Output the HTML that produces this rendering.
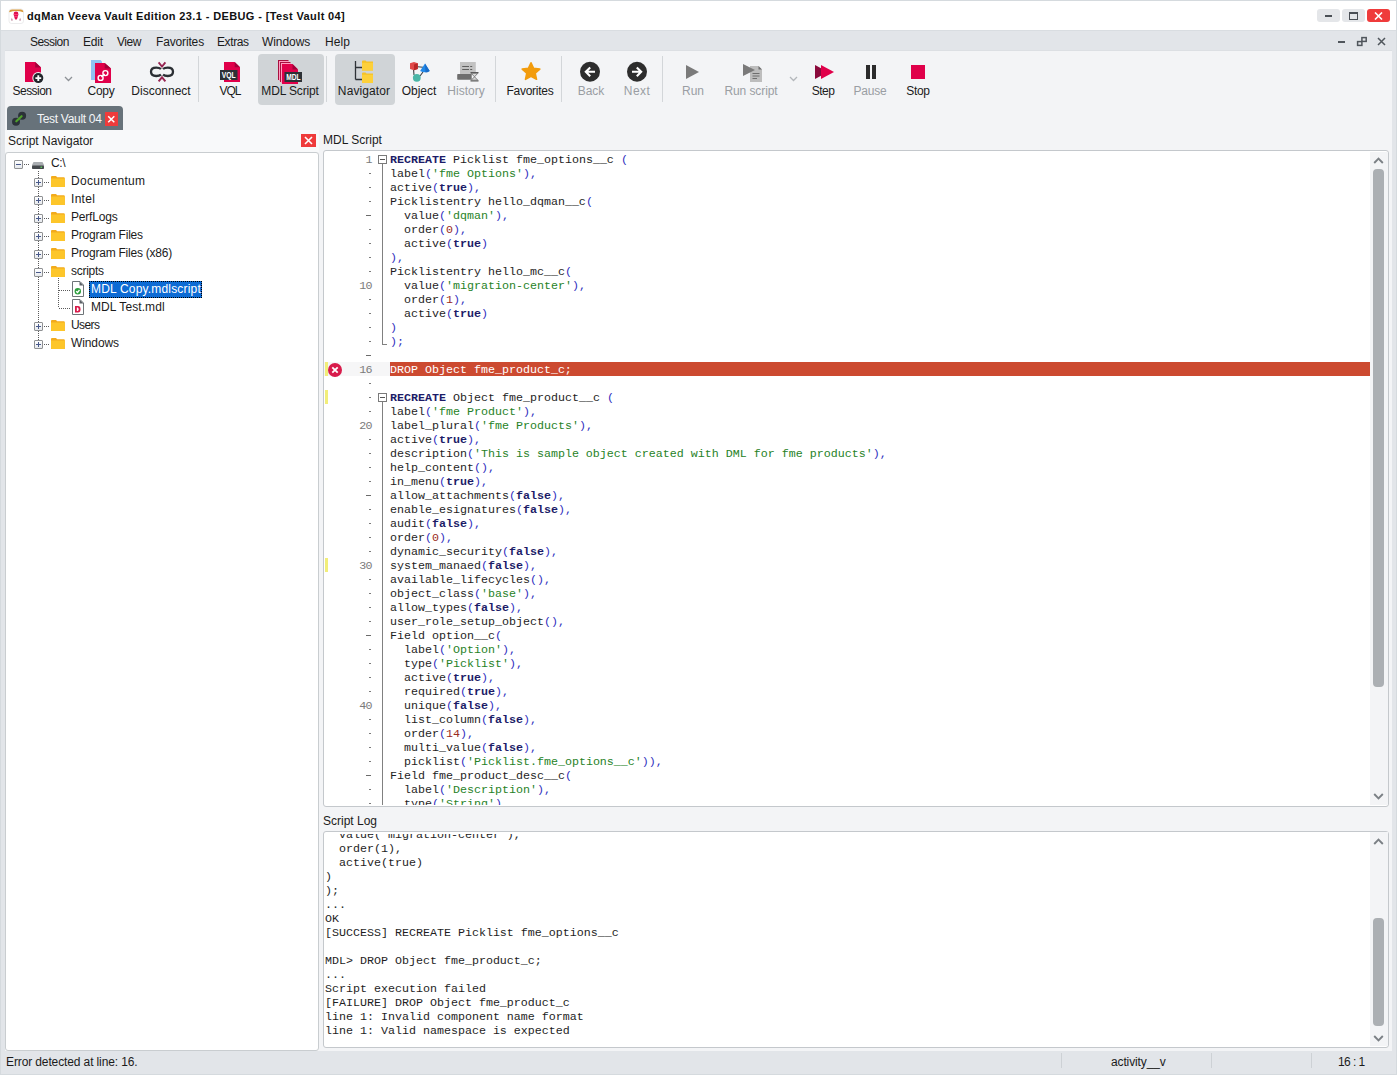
<!DOCTYPE html>
<html><head><meta charset="utf-8"><title>dqMan</title>
<style>
html,body{margin:0;padding:0;}
body{width:1397px;height:1075px;position:relative;overflow:hidden;background:#e2e5e9;font-family:"Liberation Sans",sans-serif;}
body div, body svg{position:absolute;box-sizing:content-box;}
.t{white-space:pre;line-height:normal;font-family:"Liberation Sans",sans-serif;}
.m{white-space:pre;font-family:"Liberation Mono",monospace;font-size:11.667px;line-height:14px;height:14px;padding-top:1px;}
.ln{color:#7b7b7b;}
</style></head><body>
<div style="left:0px;top:0px;width:1397px;height:1075px;background:#d5dade;"></div>
<div style="left:1px;top:1px;width:1395px;height:1073px;background:#e2e5e9;"></div>
<div style="left:1px;top:1px;width:1395px;height:29px;background:#ffffff;"></div>
<div style="left:1px;top:30px;width:1395px;height:1px;background:#d9dde1;"></div>
<div style="left:5px;top:50px;width:1387px;height:1px;background:#dcdfe3;"></div>
<div style="left:5px;top:51px;width:1387px;height:1000px;background:#f3f4f6;"></div>
<svg style="left:8px;top:8px" width="16" height="16" viewBox="0 0 16 16"><rect x="1" y="1" width="14.5" height="14.5" rx="2.5" fill="#fff" stroke="#e8e8ea" stroke-width="0.8"/><path d="M1.2 4.2 Q1.2 1.4 4 1.4 L12.6 1.4 Q15.3 1.4 15.3 4.2 Q8.3 1.8 1.2 4.2Z" fill="#d99a3a"/><path d="M6 4.3 Q8 2.8 10 4.3 L10.4 6.4 L9.9 8.2 L9.3 10.5 L8 12 L6.7 10.5 L6.1 8.2 L5.6 6.4Z" fill="#e0104e"/><path d="M5.8 6.6 H10.2 M6.2 8.6 H9.8" stroke="#ff5a90" stroke-width="0.7"/><path d="M3.3 12.5 L3.9 9.8 L4.6 12.5Z M11.4 12.5 L12.1 9.8 L12.7 12.5Z" fill="#9a4a6a"/></svg>
<div class="t" style="left:27px;top:10px;font-size:11px;color:#111;font-weight:700;letter-spacing:0.38px">dqMan Veeva Vault Edition 23.1 - DEBUG - [Test Vault 04]</div>
<div style="left:1317px;top:9px;width:23px;height:13px;background:#e4e6e9;border-radius:3px"></div>
<div style="left:1325px;top:15px;width:7px;height:2px;background:#4a4f55;"></div>
<div style="left:1342px;top:9px;width:23px;height:13px;background:#e4e6e9;border-radius:3px"></div>
<div style="left:1349px;top:12px;width:7px;height:5px;border:1px solid #4a4f55;border-top-width:2px"></div>
<div style="left:1367px;top:9px;width:23px;height:13px;background:#ef3b3b;border-radius:3px"></div>
<svg style="left:1374px;top:12px" width="9" height="8" viewBox="0 0 9 8"><path d="M1 0.5 L8 7.5 M8 0.5 L1 7.5" stroke="#fff" stroke-width="1.6"/></svg>
<div class="t" style="left:30px;top:35px;font-size:12px;color:#1b1b1b;font-weight:400;letter-spacing:-0.55px">Session</div>
<div class="t" style="left:83px;top:35px;font-size:12px;color:#1b1b1b;font-weight:400;letter-spacing:-0.2px">Edit</div>
<div class="t" style="left:117px;top:35px;font-size:12px;color:#1b1b1b;font-weight:400;letter-spacing:-0.5px">View</div>
<div class="t" style="left:156px;top:35px;font-size:12px;color:#1b1b1b;font-weight:400;letter-spacing:-0.15px">Favorites</div>
<div class="t" style="left:217px;top:35px;font-size:12px;color:#1b1b1b;font-weight:400;letter-spacing:-0.4px">Extras</div>
<div class="t" style="left:262px;top:35px;font-size:12px;color:#1b1b1b;font-weight:400;letter-spacing:-0.07px">Windows</div>
<div class="t" style="left:325px;top:35px;font-size:12px;color:#1b1b1b;font-weight:400;letter-spacing:0.1px">Help</div>
<div style="left:1338px;top:41px;width:7px;height:2px;background:#50565c;"></div>
<svg style="left:1356px;top:36px" width="12" height="11" viewBox="0 0 12 11"><rect x="1.6" y="5.6" width="4.3" height="3.8" fill="none" stroke="#50565c" stroke-width="1.5"/><rect x="5.9" y="1.6" width="4.3" height="3.8" fill="none" stroke="#50565c" stroke-width="1.5"/></svg>
<svg style="left:1377px;top:37px" width="9" height="9" viewBox="0 0 9 9"><path d="M1 1 L8 8 M8 1 L1 8" stroke="#50565c" stroke-width="1.5"/></svg>
<div style="left:258px;top:54px;width:66px;height:51px;background:#d0d4d7;border-radius:4px"></div>
<div style="left:335px;top:54px;width:60px;height:51px;background:#d0d4d7;border-radius:4px"></div>
<div style="left:198px;top:56px;width:1px;height:46px;background:#d3d6d9;"></div>
<div style="left:326px;top:56px;width:1px;height:46px;background:#d3d6d9;"></div>
<div style="left:495px;top:56px;width:1px;height:46px;background:#d3d6d9;"></div>
<div style="left:561px;top:56px;width:1px;height:46px;background:#d3d6d9;"></div>
<div style="left:662px;top:56px;width:1px;height:46px;background:#d3d6d9;"></div>
<div class="t" style="left:-68px;width:200px;text-align:center;top:84px;font-size:12px;color:#1b1b1b;font-weight:400;letter-spacing:-0.55px">Session</div>
<div class="t" style="left:1px;width:200px;text-align:center;top:84px;font-size:12px;color:#1b1b1b;font-weight:400;letter-spacing:-0.3px">Copy</div>
<div class="t" style="left:61px;width:200px;text-align:center;top:84px;font-size:12px;color:#1b1b1b;font-weight:400;letter-spacing:0px">Disconnect</div>
<div class="t" style="left:130px;width:200px;text-align:center;top:84px;font-size:12px;color:#1b1b1b;font-weight:400;letter-spacing:-1.0px">VQL</div>
<div class="t" style="left:190px;width:200px;text-align:center;top:84px;font-size:12px;color:#1b1b1b;font-weight:400;letter-spacing:-0.15px">MDL Script</div>
<div class="t" style="left:264px;width:200px;text-align:center;top:84px;font-size:12px;color:#1b1b1b;font-weight:400;letter-spacing:0.1px">Navigator</div>
<div class="t" style="left:319px;width:200px;text-align:center;top:84px;font-size:12px;color:#1b1b1b;font-weight:400;letter-spacing:0px">Object</div>
<div class="t" style="left:366px;width:200px;text-align:center;top:84px;font-size:12px;color:#9a9ea3;font-weight:400;letter-spacing:0px">History</div>
<div class="t" style="left:430px;width:200px;text-align:center;top:84px;font-size:12px;color:#1b1b1b;font-weight:400;letter-spacing:-0.25px">Favorites</div>
<div class="t" style="left:491px;width:200px;text-align:center;top:84px;font-size:12px;color:#9a9ea3;font-weight:400;letter-spacing:0px">Back</div>
<div class="t" style="left:537px;width:200px;text-align:center;top:84px;font-size:12px;color:#9a9ea3;font-weight:400;letter-spacing:0.4px">Next</div>
<div class="t" style="left:593px;width:200px;text-align:center;top:84px;font-size:12px;color:#9a9ea3;font-weight:400;letter-spacing:0px">Run</div>
<div class="t" style="left:651px;width:200px;text-align:center;top:84px;font-size:12px;color:#9a9ea3;font-weight:400;letter-spacing:-0.08px">Run script</div>
<div class="t" style="left:723px;width:200px;text-align:center;top:84px;font-size:12px;color:#1b1b1b;font-weight:400;letter-spacing:-0.5px">Step</div>
<div class="t" style="left:770px;width:200px;text-align:center;top:84px;font-size:12px;color:#9a9ea3;font-weight:400;letter-spacing:-0.25px">Pause</div>
<div class="t" style="left:818px;width:200px;text-align:center;top:84px;font-size:12px;color:#1b1b1b;font-weight:400;letter-spacing:-0.3px">Stop</div>
<div style="left:7px;top:106px;width:116px;height:24px;background:#67727a;border-radius:4px 4px 0 0"></div>
<div class="t" style="left:37px;top:112px;font-size:12px;color:#f4f6f8;font-weight:400;letter-spacing:-0.3px">Test Vault 04</div>
<div style="left:105px;top:112px;width:13px;height:14px;background:#ef3b3b;"></div>
<svg style="left:106px;top:114px" width="10" height="10" viewBox="0 0 10 10"><path d="M2.2 2.2 L8.3 8.3 M8.3 2.2 L2.2 8.3" stroke="#fff" stroke-width="1.5"/></svg>
<svg style="left:10px;top:110px" width="18" height="18" viewBox="0 0 18 18"><circle cx="6" cy="11.8" r="4" fill="#2b3138"/><circle cx="12.1" cy="5.8" r="4" fill="#2b3138"/><path d="M6.3 11.3 L11.6 6.2" stroke="#4fa02a" stroke-width="2.2" stroke-linecap="round"/></svg>
<div style="left:5px;top:130px;width:314px;height:22px;background:#f8f9fa;"></div>
<div class="t" style="left:8px;top:134px;font-size:12px;color:#1b1b1b;font-weight:400;">Script Navigator</div>
<div style="left:301px;top:134px;width:15px;height:13px;background:#ef3b3b;"></div>
<svg style="left:304px;top:136px" width="9" height="9" viewBox="0 0 9 9"><path d="M1 1 L8 8 M8 1 L1 8" stroke="#fff" stroke-width="1.6"/></svg>
<div class="t" style="left:323px;top:133px;font-size:12px;color:#1b1b1b;font-weight:400;">MDL Script</div>
<div class="t" style="left:323px;top:814px;font-size:12px;color:#1b1b1b;font-weight:400;">Script Log</div>
<div style="left:5px;top:152px;width:312px;height:897px;background:#fff;border:1px solid #c9cdd0;border-radius:3px"></div>
<div style="left:323px;top:150px;width:1064px;height:655px;background:#fff;border:1px solid #c4c8cc;border-radius:3px"></div>
<div style="left:323px;top:831px;width:1064px;height:215px;background:#fff;border:1px solid #c4c8cc;border-radius:3px"></div>
<div class="t" style="left:6px;top:1055px;font-size:12px;color:#1b1b1b;font-weight:400;letter-spacing:-0.12px">Error detected at line: 16.</div>
<div style="left:1061px;top:1053px;width:1px;height:15px;background:#cdd1d5;"></div>
<div style="left:1211px;top:1053px;width:1px;height:15px;background:#cdd1d5;"></div>
<div style="left:1311px;top:1053px;width:1px;height:15px;background:#cdd1d5;"></div>
<div class="t" style="left:1111px;top:1055px;font-size:12px;color:#1b1b1b;font-weight:400;letter-spacing:-0.13px">activity__v</div>
<div class="t" style="left:1338px;top:1055px;font-size:12px;color:#1b1b1b;font-weight:400;letter-spacing:-0.55px">16 : 1</div>
<div style="left:324px;top:152px;width:1046px;height:653px;overflow:hidden">
<div class="m" style="left:40px;top:0px;width:0"></div>
<div class="m ln" style="left:12px;top:0px;width:36px;text-align:right;letter-spacing:-0.6px">1</div>
<div class="m" style="left:66px;top:0px"><span style="color:#1c1c68;font-weight:700">RECREATE</span><span style=""> </span><span style="color:#1e1e1e">Picklist</span><span style=""> </span><span style="color:#1e1e1e">fme_options__c</span><span style=""> </span><span style="color:#2f2fbe">(</span></div>
<div style="left:45px;top:21px;width:2px;height:1px;background:#7a7a7a"></div>
<div class="m" style="left:66px;top:14px"><span style="color:#1e1e1e">label</span><span style="color:#2f2fbe">(</span><span style="color:#278227">&#x27;fme Options&#x27;</span><span style="color:#2f2fbe">)</span><span style="color:#2f2fbe">,</span></div>
<div style="left:45px;top:35px;width:2px;height:1px;background:#7a7a7a"></div>
<div class="m" style="left:66px;top:28px"><span style="color:#1e1e1e">active</span><span style="color:#2f2fbe">(</span><span style="color:#1c1c68;font-weight:700">true</span><span style="color:#2f2fbe">)</span><span style="color:#2f2fbe">,</span></div>
<div style="left:45px;top:49px;width:2px;height:1px;background:#7a7a7a"></div>
<div class="m" style="left:66px;top:42px"><span style="color:#1e1e1e">Picklistentry</span><span style=""> </span><span style="color:#1e1e1e">hello_dqman__c</span><span style="color:#2f2fbe">(</span></div>
<div style="left:42px;top:63px;width:5px;height:1px;background:#6b6b6b"></div>
<div class="m" style="left:66px;top:56px"><span style=""> </span><span style=""> </span><span style="color:#1e1e1e">value</span><span style="color:#2f2fbe">(</span><span style="color:#278227">&#x27;dqman&#x27;</span><span style="color:#2f2fbe">)</span><span style="color:#2f2fbe">,</span></div>
<div style="left:45px;top:77px;width:2px;height:1px;background:#7a7a7a"></div>
<div class="m" style="left:66px;top:70px"><span style=""> </span><span style=""> </span><span style="color:#1e1e1e">order</span><span style="color:#2f2fbe">(</span><span style="color:#9a2a20">0</span><span style="color:#2f2fbe">)</span><span style="color:#2f2fbe">,</span></div>
<div style="left:45px;top:91px;width:2px;height:1px;background:#7a7a7a"></div>
<div class="m" style="left:66px;top:84px"><span style=""> </span><span style=""> </span><span style="color:#1e1e1e">active</span><span style="color:#2f2fbe">(</span><span style="color:#1c1c68;font-weight:700">true</span><span style="color:#2f2fbe">)</span></div>
<div style="left:45px;top:105px;width:2px;height:1px;background:#7a7a7a"></div>
<div class="m" style="left:66px;top:98px"><span style="color:#2f2fbe">)</span><span style="color:#2f2fbe">,</span></div>
<div style="left:45px;top:119px;width:2px;height:1px;background:#7a7a7a"></div>
<div class="m" style="left:66px;top:112px"><span style="color:#1e1e1e">Picklistentry</span><span style=""> </span><span style="color:#1e1e1e">hello_mc__c</span><span style="color:#2f2fbe">(</span></div>
<div class="m" style="left:33px;top:126px;width:0"></div>
<div class="m ln" style="left:12px;top:126px;width:36px;text-align:right;letter-spacing:-0.6px">10</div>
<div class="m" style="left:66px;top:126px"><span style=""> </span><span style=""> </span><span style="color:#1e1e1e">value</span><span style="color:#2f2fbe">(</span><span style="color:#278227">&#x27;migration-center&#x27;</span><span style="color:#2f2fbe">)</span><span style="color:#2f2fbe">,</span></div>
<div style="left:45px;top:147px;width:2px;height:1px;background:#7a7a7a"></div>
<div class="m" style="left:66px;top:140px"><span style=""> </span><span style=""> </span><span style="color:#1e1e1e">order</span><span style="color:#2f2fbe">(</span><span style="color:#9a2a20">1</span><span style="color:#2f2fbe">)</span><span style="color:#2f2fbe">,</span></div>
<div style="left:45px;top:161px;width:2px;height:1px;background:#7a7a7a"></div>
<div class="m" style="left:66px;top:154px"><span style=""> </span><span style=""> </span><span style="color:#1e1e1e">active</span><span style="color:#2f2fbe">(</span><span style="color:#1c1c68;font-weight:700">true</span><span style="color:#2f2fbe">)</span></div>
<div style="left:45px;top:175px;width:2px;height:1px;background:#7a7a7a"></div>
<div class="m" style="left:66px;top:168px"><span style="color:#2f2fbe">)</span></div>
<div style="left:45px;top:189px;width:2px;height:1px;background:#7a7a7a"></div>
<div class="m" style="left:66px;top:182px"><span style="color:#2f2fbe">)</span><span style="color:#2f2fbe">;</span></div>
<div style="left:42px;top:203px;width:5px;height:1px;background:#6b6b6b"></div>
<div class="m" style="left:66px;top:196px"></div>
<div style="left:0px;top:210px;width:66px;height:14px;background:#f6f6f7"></div>
<div style="left:66px;top:210px;width:980px;height:14px;background:#cc4a30"></div>
<div class="m" style="left:33px;top:210px;width:0"></div>
<div class="m ln" style="left:12px;top:210px;width:36px;text-align:right;letter-spacing:-0.6px">16</div>
<div class="m" style="left:66px;top:210px;color:#fff">DROP Object fme_product_c;</div>
<div style="left:45px;top:231px;width:2px;height:1px;background:#7a7a7a"></div>
<div class="m" style="left:66px;top:224px"></div>
<div style="left:45px;top:245px;width:2px;height:1px;background:#7a7a7a"></div>
<div class="m" style="left:66px;top:238px"><span style="color:#1c1c68;font-weight:700">RECREATE</span><span style=""> </span><span style="color:#1e1e1e">Object</span><span style=""> </span><span style="color:#1e1e1e">fme_product__c</span><span style=""> </span><span style="color:#2f2fbe">(</span></div>
<div style="left:45px;top:259px;width:2px;height:1px;background:#7a7a7a"></div>
<div class="m" style="left:66px;top:252px"><span style="color:#1e1e1e">label</span><span style="color:#2f2fbe">(</span><span style="color:#278227">&#x27;fme Product&#x27;</span><span style="color:#2f2fbe">)</span><span style="color:#2f2fbe">,</span></div>
<div class="m" style="left:33px;top:266px;width:0"></div>
<div class="m ln" style="left:12px;top:266px;width:36px;text-align:right;letter-spacing:-0.6px">20</div>
<div class="m" style="left:66px;top:266px"><span style="color:#1e1e1e">label_plural</span><span style="color:#2f2fbe">(</span><span style="color:#278227">&#x27;fme Products&#x27;</span><span style="color:#2f2fbe">)</span><span style="color:#2f2fbe">,</span></div>
<div style="left:45px;top:287px;width:2px;height:1px;background:#7a7a7a"></div>
<div class="m" style="left:66px;top:280px"><span style="color:#1e1e1e">active</span><span style="color:#2f2fbe">(</span><span style="color:#1c1c68;font-weight:700">true</span><span style="color:#2f2fbe">)</span><span style="color:#2f2fbe">,</span></div>
<div style="left:45px;top:301px;width:2px;height:1px;background:#7a7a7a"></div>
<div class="m" style="left:66px;top:294px"><span style="color:#1e1e1e">description</span><span style="color:#2f2fbe">(</span><span style="color:#278227">&#x27;This is sample object created with DML for fme products&#x27;</span><span style="color:#2f2fbe">)</span><span style="color:#2f2fbe">,</span></div>
<div style="left:45px;top:315px;width:2px;height:1px;background:#7a7a7a"></div>
<div class="m" style="left:66px;top:308px"><span style="color:#1e1e1e">help_content</span><span style="color:#2f2fbe">(</span><span style="color:#2f2fbe">)</span><span style="color:#2f2fbe">,</span></div>
<div style="left:45px;top:329px;width:2px;height:1px;background:#7a7a7a"></div>
<div class="m" style="left:66px;top:322px"><span style="color:#1e1e1e">in_menu</span><span style="color:#2f2fbe">(</span><span style="color:#1c1c68;font-weight:700">true</span><span style="color:#2f2fbe">)</span><span style="color:#2f2fbe">,</span></div>
<div style="left:42px;top:343px;width:5px;height:1px;background:#6b6b6b"></div>
<div class="m" style="left:66px;top:336px"><span style="color:#1e1e1e">allow_attachments</span><span style="color:#2f2fbe">(</span><span style="color:#1c1c68;font-weight:700">false</span><span style="color:#2f2fbe">)</span><span style="color:#2f2fbe">,</span></div>
<div style="left:45px;top:357px;width:2px;height:1px;background:#7a7a7a"></div>
<div class="m" style="left:66px;top:350px"><span style="color:#1e1e1e">enable_esignatures</span><span style="color:#2f2fbe">(</span><span style="color:#1c1c68;font-weight:700">false</span><span style="color:#2f2fbe">)</span><span style="color:#2f2fbe">,</span></div>
<div style="left:45px;top:371px;width:2px;height:1px;background:#7a7a7a"></div>
<div class="m" style="left:66px;top:364px"><span style="color:#1e1e1e">audit</span><span style="color:#2f2fbe">(</span><span style="color:#1c1c68;font-weight:700">false</span><span style="color:#2f2fbe">)</span><span style="color:#2f2fbe">,</span></div>
<div style="left:45px;top:385px;width:2px;height:1px;background:#7a7a7a"></div>
<div class="m" style="left:66px;top:378px"><span style="color:#1e1e1e">order</span><span style="color:#2f2fbe">(</span><span style="color:#9a2a20">0</span><span style="color:#2f2fbe">)</span><span style="color:#2f2fbe">,</span></div>
<div style="left:45px;top:399px;width:2px;height:1px;background:#7a7a7a"></div>
<div class="m" style="left:66px;top:392px"><span style="color:#1e1e1e">dynamic_security</span><span style="color:#2f2fbe">(</span><span style="color:#1c1c68;font-weight:700">false</span><span style="color:#2f2fbe">)</span><span style="color:#2f2fbe">,</span></div>
<div class="m" style="left:33px;top:406px;width:0"></div>
<div class="m ln" style="left:12px;top:406px;width:36px;text-align:right;letter-spacing:-0.6px">30</div>
<div class="m" style="left:66px;top:406px"><span style="color:#1e1e1e">system_manaed</span><span style="color:#2f2fbe">(</span><span style="color:#1c1c68;font-weight:700">false</span><span style="color:#2f2fbe">)</span><span style="color:#2f2fbe">,</span></div>
<div style="left:45px;top:427px;width:2px;height:1px;background:#7a7a7a"></div>
<div class="m" style="left:66px;top:420px"><span style="color:#1e1e1e">available_lifecycles</span><span style="color:#2f2fbe">(</span><span style="color:#2f2fbe">)</span><span style="color:#2f2fbe">,</span></div>
<div style="left:45px;top:441px;width:2px;height:1px;background:#7a7a7a"></div>
<div class="m" style="left:66px;top:434px"><span style="color:#1e1e1e">object_class</span><span style="color:#2f2fbe">(</span><span style="color:#278227">&#x27;base&#x27;</span><span style="color:#2f2fbe">)</span><span style="color:#2f2fbe">,</span></div>
<div style="left:45px;top:455px;width:2px;height:1px;background:#7a7a7a"></div>
<div class="m" style="left:66px;top:448px"><span style="color:#1e1e1e">allow_types</span><span style="color:#2f2fbe">(</span><span style="color:#1c1c68;font-weight:700">false</span><span style="color:#2f2fbe">)</span><span style="color:#2f2fbe">,</span></div>
<div style="left:45px;top:469px;width:2px;height:1px;background:#7a7a7a"></div>
<div class="m" style="left:66px;top:462px"><span style="color:#1e1e1e">user_role_setup_object</span><span style="color:#2f2fbe">(</span><span style="color:#2f2fbe">)</span><span style="color:#2f2fbe">,</span></div>
<div style="left:42px;top:483px;width:5px;height:1px;background:#6b6b6b"></div>
<div class="m" style="left:66px;top:476px"><span style="color:#1e1e1e">Field</span><span style=""> </span><span style="color:#1e1e1e">option__c</span><span style="color:#2f2fbe">(</span></div>
<div style="left:45px;top:497px;width:2px;height:1px;background:#7a7a7a"></div>
<div class="m" style="left:66px;top:490px"><span style=""> </span><span style=""> </span><span style="color:#1e1e1e">label</span><span style="color:#2f2fbe">(</span><span style="color:#278227">&#x27;Option&#x27;</span><span style="color:#2f2fbe">)</span><span style="color:#2f2fbe">,</span></div>
<div style="left:45px;top:511px;width:2px;height:1px;background:#7a7a7a"></div>
<div class="m" style="left:66px;top:504px"><span style=""> </span><span style=""> </span><span style="color:#1e1e1e">type</span><span style="color:#2f2fbe">(</span><span style="color:#278227">&#x27;Picklist&#x27;</span><span style="color:#2f2fbe">)</span><span style="color:#2f2fbe">,</span></div>
<div style="left:45px;top:525px;width:2px;height:1px;background:#7a7a7a"></div>
<div class="m" style="left:66px;top:518px"><span style=""> </span><span style=""> </span><span style="color:#1e1e1e">active</span><span style="color:#2f2fbe">(</span><span style="color:#1c1c68;font-weight:700">true</span><span style="color:#2f2fbe">)</span><span style="color:#2f2fbe">,</span></div>
<div style="left:45px;top:539px;width:2px;height:1px;background:#7a7a7a"></div>
<div class="m" style="left:66px;top:532px"><span style=""> </span><span style=""> </span><span style="color:#1e1e1e">required</span><span style="color:#2f2fbe">(</span><span style="color:#1c1c68;font-weight:700">true</span><span style="color:#2f2fbe">)</span><span style="color:#2f2fbe">,</span></div>
<div class="m" style="left:33px;top:546px;width:0"></div>
<div class="m ln" style="left:12px;top:546px;width:36px;text-align:right;letter-spacing:-0.6px">40</div>
<div class="m" style="left:66px;top:546px"><span style=""> </span><span style=""> </span><span style="color:#1e1e1e">unique</span><span style="color:#2f2fbe">(</span><span style="color:#1c1c68;font-weight:700">false</span><span style="color:#2f2fbe">)</span><span style="color:#2f2fbe">,</span></div>
<div style="left:45px;top:567px;width:2px;height:1px;background:#7a7a7a"></div>
<div class="m" style="left:66px;top:560px"><span style=""> </span><span style=""> </span><span style="color:#1e1e1e">list_column</span><span style="color:#2f2fbe">(</span><span style="color:#1c1c68;font-weight:700">false</span><span style="color:#2f2fbe">)</span><span style="color:#2f2fbe">,</span></div>
<div style="left:45px;top:581px;width:2px;height:1px;background:#7a7a7a"></div>
<div class="m" style="left:66px;top:574px"><span style=""> </span><span style=""> </span><span style="color:#1e1e1e">order</span><span style="color:#2f2fbe">(</span><span style="color:#9a2a20">14</span><span style="color:#2f2fbe">)</span><span style="color:#2f2fbe">,</span></div>
<div style="left:45px;top:595px;width:2px;height:1px;background:#7a7a7a"></div>
<div class="m" style="left:66px;top:588px"><span style=""> </span><span style=""> </span><span style="color:#1e1e1e">multi_value</span><span style="color:#2f2fbe">(</span><span style="color:#1c1c68;font-weight:700">false</span><span style="color:#2f2fbe">)</span><span style="color:#2f2fbe">,</span></div>
<div style="left:45px;top:609px;width:2px;height:1px;background:#7a7a7a"></div>
<div class="m" style="left:66px;top:602px"><span style=""> </span><span style=""> </span><span style="color:#1e1e1e">picklist</span><span style="color:#2f2fbe">(</span><span style="color:#278227">&#x27;Picklist.fme_options__c&#x27;</span><span style="color:#2f2fbe">)</span><span style="color:#2f2fbe">)</span><span style="color:#2f2fbe">,</span></div>
<div style="left:42px;top:623px;width:5px;height:1px;background:#6b6b6b"></div>
<div class="m" style="left:66px;top:616px"><span style="color:#1e1e1e">Field</span><span style=""> </span><span style="color:#1e1e1e">fme_product_desc__c</span><span style="color:#2f2fbe">(</span></div>
<div style="left:45px;top:637px;width:2px;height:1px;background:#7a7a7a"></div>
<div class="m" style="left:66px;top:630px"><span style=""> </span><span style=""> </span><span style="color:#1e1e1e">label</span><span style="color:#2f2fbe">(</span><span style="color:#278227">&#x27;Description&#x27;</span><span style="color:#2f2fbe">)</span><span style="color:#2f2fbe">,</span></div>
<div style="left:45px;top:651px;width:2px;height:1px;background:#7a7a7a"></div>
<div class="m" style="left:66px;top:644px"><span style=""> </span><span style=""> </span><span style="color:#1e1e1e">type</span><span style="color:#2f2fbe">(</span><span style="color:#278227">&#x27;String&#x27;</span><span style="color:#2f2fbe">)</span><span style="color:#2f2fbe">,</span></div>
<div style="left:54px;top:3px;width:7px;height:7px;border:1px solid #7a7a7a;background:#fff"></div>
<div style="left:56px;top:7px;width:5px;height:1px;background:#555"></div>
<div style="left:54px;top:241px;width:7px;height:7px;border:1px solid #7a7a7a;background:#fff"></div>
<div style="left:56px;top:245px;width:5px;height:1px;background:#555"></div>
<div style="left:58px;top:12px;width:1px;height:181px;background:#808080"></div>
<div style="left:58px;top:192px;width:5px;height:1px;background:#808080"></div>
<div style="left:58px;top:250px;width:1px;height:500px;background:#808080"></div>
<div style="left:1px;top:210px;width:3px;height:14px;background:#f2ee7a"></div>
<div style="left:1px;top:238px;width:3px;height:14px;background:#f2ee7a"></div>
<div style="left:1px;top:406px;width:3px;height:14px;background:#f2ee7a"></div>
<svg style="left:4px;top:211px" width="14" height="14" viewBox="0 0 14 14"><circle cx="7" cy="7" r="7" fill="#d81b4b"/><path d="M4.3 4.3 L9.7 9.7 M9.7 4.3 L4.3 9.7" stroke="#fff" stroke-width="1.8"/></svg>
</div>
<div style="left:1370px;top:152px;width:18px;height:653px;background:#f3f4f6;"></div>
<div style="left:1373px;top:169px;width:11px;height:518px;background:#abafb3;border-radius:4px"></div>
<svg style="left:1373px;top:157px" width="11" height="8" viewBox="0 0 11 8"><path d="M1.2 6 L5.5 1.7 L9.8 6" fill="none" stroke="#7b8085" stroke-width="1.9"/></svg>
<svg style="left:1373px;top:792px" width="11" height="8" viewBox="0 0 11 8"><path d="M1.2 2 L5.5 6.3 L9.8 2" fill="none" stroke="#7b8085" stroke-width="1.9"/></svg>
<div style="left:324px;top:834px;width:1046px;height:212px;overflow:hidden">
<div class="m" style="left:1px;top:-7px;color:#1e1e1e">  value(&#x27;migration-center&#x27;),</div>
<div class="m" style="left:1px;top:7px;color:#1e1e1e">  order(1),</div>
<div class="m" style="left:1px;top:21px;color:#1e1e1e">  active(true)</div>
<div class="m" style="left:1px;top:35px;color:#1e1e1e">)</div>
<div class="m" style="left:1px;top:49px;color:#1e1e1e">);</div>
<div class="m" style="left:1px;top:63px;color:#1e1e1e">...</div>
<div class="m" style="left:1px;top:77px;color:#1e1e1e">OK</div>
<div class="m" style="left:1px;top:91px;color:#1e1e1e">[SUCCESS] RECREATE Picklist fme_options__c</div>
<div class="m" style="left:1px;top:105px;color:#1e1e1e"></div>
<div class="m" style="left:1px;top:119px;color:#1e1e1e">MDL&gt; DROP Object fme_product_c;</div>
<div class="m" style="left:1px;top:133px;color:#1e1e1e">...</div>
<div class="m" style="left:1px;top:147px;color:#1e1e1e">Script execution failed</div>
<div class="m" style="left:1px;top:161px;color:#1e1e1e">[FAILURE] DROP Object fme_product_c</div>
<div class="m" style="left:1px;top:175px;color:#1e1e1e">line 1: Invalid component name format</div>
<div class="m" style="left:1px;top:189px;color:#1e1e1e">line 1: Valid namespace is expected</div>
</div>
<div style="left:1370px;top:832px;width:18px;height:214px;background:#f3f4f6;"></div>
<div style="left:1373px;top:918px;width:11px;height:108px;background:#abafb3;border-radius:4px"></div>
<svg style="left:1373px;top:838px" width="11" height="8" viewBox="0 0 11 8"><path d="M1.2 6 L5.5 1.7 L9.8 6" fill="none" stroke="#7b8085" stroke-width="1.9"/></svg>
<svg style="left:1373px;top:1034px" width="11" height="8" viewBox="0 0 11 8"><path d="M1.2 2 L5.5 6.3 L9.8 2" fill="none" stroke="#7b8085" stroke-width="1.9"/></svg>
<div style="left:14px;top:160px;width:7px;height:7px;border:1px solid #8f9193;background:linear-gradient(#fff,#e6e9ed);border-radius:1px"></div>
<div style="left:16px;top:164px;width:5px;height:1px;background:#48598a"></div>
<div style="left:24px;top:164px;width:6px;height:1px;background:repeating-linear-gradient(90deg,#5a5a5a 0 1px,transparent 1px 2px)"></div>
<svg style="left:32px;top:161px" width="12" height="9" viewBox="0 0 12 9"><path d="M1.5 1 L10.5 1 L12 4 L12 7 Q12 8 11 8 L1 8 Q0 8 0 7 L0 4Z" fill="#a9adb1"/><rect x="0" y="4.5" width="12" height="3.5" rx="1" fill="#45494d"/><rect x="8.5" y="5.6" width="1.6" height="1.3" fill="#5fd35f"/></svg>
<div class="t" style="left:51px;top:156px;font-size:12px;color:#1b1b1b;font-weight:400;letter-spacing:-0.4px">C:\</div>
<div style="left:38px;top:171px;width:1px;height:172px;background:repeating-linear-gradient(180deg,#5a5a5a 0 1px,transparent 1px 2px)"></div>
<div style="left:34px;top:178px;width:7px;height:7px;border:1px solid #8f9193;background:linear-gradient(#fff,#e6e9ed);border-radius:1px"></div>
<div style="left:36px;top:182px;width:5px;height:1px;background:#48598a"></div>
<div style="left:38px;top:180px;width:1px;height:5px;background:#48598a"></div>
<div style="left:44px;top:182px;width:6px;height:1px;background:repeating-linear-gradient(90deg,#5a5a5a 0 1px,transparent 1px 2px)"></div>
<svg style="left:51px;top:176px" width="15" height="12" viewBox="0 0 15 12"><path d="M0 1 Q0 0 1 0 L5 0 L6.2 1.2 L12.8 1.2 Q13.8 1.2 13.8 2.2 L13.8 11 L0 11Z" fill="#f2ab1c"/><path d="M0 2.4 L13.8 2.4 L13.8 10.2 Q13.8 11 13 11 L0.8 11 Q0 11 0 10.2Z" fill="#fdc62a"/></svg>
<div class="t" style="left:71px;top:174px;font-size:12px;color:#1b1b1b;font-weight:400;letter-spacing:0.3px">Documentum</div>
<div style="left:34px;top:196px;width:7px;height:7px;border:1px solid #8f9193;background:linear-gradient(#fff,#e6e9ed);border-radius:1px"></div>
<div style="left:36px;top:200px;width:5px;height:1px;background:#48598a"></div>
<div style="left:38px;top:198px;width:1px;height:5px;background:#48598a"></div>
<div style="left:44px;top:200px;width:6px;height:1px;background:repeating-linear-gradient(90deg,#5a5a5a 0 1px,transparent 1px 2px)"></div>
<svg style="left:51px;top:194px" width="15" height="12" viewBox="0 0 15 12"><path d="M0 1 Q0 0 1 0 L5 0 L6.2 1.2 L12.8 1.2 Q13.8 1.2 13.8 2.2 L13.8 11 L0 11Z" fill="#f2ab1c"/><path d="M0 2.4 L13.8 2.4 L13.8 10.2 Q13.8 11 13 11 L0.8 11 Q0 11 0 10.2Z" fill="#fdc62a"/></svg>
<div class="t" style="left:71px;top:192px;font-size:12px;color:#1b1b1b;font-weight:400;letter-spacing:0.3px">Intel</div>
<div style="left:34px;top:214px;width:7px;height:7px;border:1px solid #8f9193;background:linear-gradient(#fff,#e6e9ed);border-radius:1px"></div>
<div style="left:36px;top:218px;width:5px;height:1px;background:#48598a"></div>
<div style="left:38px;top:216px;width:1px;height:5px;background:#48598a"></div>
<div style="left:44px;top:218px;width:6px;height:1px;background:repeating-linear-gradient(90deg,#5a5a5a 0 1px,transparent 1px 2px)"></div>
<svg style="left:51px;top:212px" width="15" height="12" viewBox="0 0 15 12"><path d="M0 1 Q0 0 1 0 L5 0 L6.2 1.2 L12.8 1.2 Q13.8 1.2 13.8 2.2 L13.8 11 L0 11Z" fill="#f2ab1c"/><path d="M0 2.4 L13.8 2.4 L13.8 10.2 Q13.8 11 13 11 L0.8 11 Q0 11 0 10.2Z" fill="#fdc62a"/></svg>
<div class="t" style="left:71px;top:210px;font-size:12px;color:#1b1b1b;font-weight:400;letter-spacing:-0.2px">PerfLogs</div>
<div style="left:34px;top:232px;width:7px;height:7px;border:1px solid #8f9193;background:linear-gradient(#fff,#e6e9ed);border-radius:1px"></div>
<div style="left:36px;top:236px;width:5px;height:1px;background:#48598a"></div>
<div style="left:38px;top:234px;width:1px;height:5px;background:#48598a"></div>
<div style="left:44px;top:236px;width:6px;height:1px;background:repeating-linear-gradient(90deg,#5a5a5a 0 1px,transparent 1px 2px)"></div>
<svg style="left:51px;top:230px" width="15" height="12" viewBox="0 0 15 12"><path d="M0 1 Q0 0 1 0 L5 0 L6.2 1.2 L12.8 1.2 Q13.8 1.2 13.8 2.2 L13.8 11 L0 11Z" fill="#f2ab1c"/><path d="M0 2.4 L13.8 2.4 L13.8 10.2 Q13.8 11 13 11 L0.8 11 Q0 11 0 10.2Z" fill="#fdc62a"/></svg>
<div class="t" style="left:71px;top:228px;font-size:12px;color:#1b1b1b;font-weight:400;letter-spacing:-0.22px">Program Files</div>
<div style="left:34px;top:250px;width:7px;height:7px;border:1px solid #8f9193;background:linear-gradient(#fff,#e6e9ed);border-radius:1px"></div>
<div style="left:36px;top:254px;width:5px;height:1px;background:#48598a"></div>
<div style="left:38px;top:252px;width:1px;height:5px;background:#48598a"></div>
<div style="left:44px;top:254px;width:6px;height:1px;background:repeating-linear-gradient(90deg,#5a5a5a 0 1px,transparent 1px 2px)"></div>
<svg style="left:51px;top:248px" width="15" height="12" viewBox="0 0 15 12"><path d="M0 1 Q0 0 1 0 L5 0 L6.2 1.2 L12.8 1.2 Q13.8 1.2 13.8 2.2 L13.8 11 L0 11Z" fill="#f2ab1c"/><path d="M0 2.4 L13.8 2.4 L13.8 10.2 Q13.8 11 13 11 L0.8 11 Q0 11 0 10.2Z" fill="#fdc62a"/></svg>
<div class="t" style="left:71px;top:246px;font-size:12px;color:#1b1b1b;font-weight:400;letter-spacing:-0.23px">Program Files (x86)</div>
<div style="left:34px;top:268px;width:7px;height:7px;border:1px solid #8f9193;background:linear-gradient(#fff,#e6e9ed);border-radius:1px"></div>
<div style="left:36px;top:272px;width:5px;height:1px;background:#48598a"></div>
<div style="left:44px;top:272px;width:6px;height:1px;background:repeating-linear-gradient(90deg,#5a5a5a 0 1px,transparent 1px 2px)"></div>
<svg style="left:51px;top:266px" width="15" height="12" viewBox="0 0 15 12"><path d="M0 1 Q0 0 1 0 L5 0 L6.2 1.2 L12.8 1.2 Q13.8 1.2 13.8 2.2 L13.8 11 L0 11Z" fill="#f2ab1c"/><path d="M0 2.4 L13.8 2.4 L13.8 10.2 Q13.8 11 13 11 L0.8 11 Q0 11 0 10.2Z" fill="#fdc62a"/></svg>
<div class="t" style="left:71px;top:264px;font-size:12px;color:#1b1b1b;font-weight:400;letter-spacing:-0.27px">scripts</div>
<div style="left:58px;top:278px;width:1px;height:30px;background:repeating-linear-gradient(180deg,#5a5a5a 0 1px,transparent 1px 2px)"></div>
<div style="left:59px;top:290px;width:12px;height:1px;background:repeating-linear-gradient(90deg,#5a5a5a 0 1px,transparent 1px 2px)"></div>
<div style="left:89px;top:281px;width:113px;height:17px;background:#0d6bd4;outline:1px dotted #000;outline-offset:-1px"></div>
<div class="t" style="left:91px;top:282px;font-size:12px;color:#ffffff;font-weight:400;letter-spacing:0.18px">MDL Copy.mdlscript</div>
<svg style="left:72px;top:281px" width="12" height="16" viewBox="0 0 12 16"><path d="M0.5 0.5 L8 0.5 L11.5 4 L11.5 15.5 L0.5 15.5Z" fill="#fff" stroke="#6e7478"/><path d="M7.5 0.5 L11.5 4.5 L7.5 4.5Z" fill="#5a6066"/><circle cx="5.8" cy="10.2" r="3.2" fill="#2e9e3e"/><path d="M4.2 10.2 L5.5 11.5 L7.5 9" stroke="#fff" stroke-width="1.3" fill="none"/></svg>
<div style="left:59px;top:308px;width:12px;height:1px;background:repeating-linear-gradient(90deg,#5a5a5a 0 1px,transparent 1px 2px)"></div>
<div class="t" style="left:91px;top:300px;font-size:12px;color:#1b1b1b;font-weight:400;letter-spacing:0.08px">MDL Test.mdl</div>
<svg style="left:72px;top:299px" width="12" height="16" viewBox="0 0 12 16"><path d="M0.5 0.5 L8 0.5 L11.5 4 L11.5 15.5 L0.5 15.5Z" fill="#fff" stroke="#6e7478"/><path d="M7.5 0.5 L11.5 4.5 L7.5 4.5Z" fill="#5a6066"/><path d="M3 7 L6 7 Q8.5 7 8.5 10.2 Q8.5 13.5 6 13.5 L3 13.5Z" fill="#d81b4b"/><path d="M4.8 8.6 L5.6 8.6 Q6.6 8.6 6.6 10.2 Q6.6 11.9 5.6 11.9 L4.8 11.9Z" fill="#fff"/></svg>
<div style="left:34px;top:322px;width:7px;height:7px;border:1px solid #8f9193;background:linear-gradient(#fff,#e6e9ed);border-radius:1px"></div>
<div style="left:36px;top:326px;width:5px;height:1px;background:#48598a"></div>
<div style="left:38px;top:324px;width:1px;height:5px;background:#48598a"></div>
<div style="left:44px;top:326px;width:6px;height:1px;background:repeating-linear-gradient(90deg,#5a5a5a 0 1px,transparent 1px 2px)"></div>
<svg style="left:51px;top:320px" width="15" height="12" viewBox="0 0 15 12"><path d="M0 1 Q0 0 1 0 L5 0 L6.2 1.2 L12.8 1.2 Q13.8 1.2 13.8 2.2 L13.8 11 L0 11Z" fill="#f2ab1c"/><path d="M0 2.4 L13.8 2.4 L13.8 10.2 Q13.8 11 13 11 L0.8 11 Q0 11 0 10.2Z" fill="#fdc62a"/></svg>
<div class="t" style="left:71px;top:318px;font-size:12px;color:#1b1b1b;font-weight:400;letter-spacing:-0.6px">Users</div>
<div style="left:34px;top:340px;width:7px;height:7px;border:1px solid #8f9193;background:linear-gradient(#fff,#e6e9ed);border-radius:1px"></div>
<div style="left:36px;top:344px;width:5px;height:1px;background:#48598a"></div>
<div style="left:38px;top:342px;width:1px;height:5px;background:#48598a"></div>
<div style="left:44px;top:344px;width:6px;height:1px;background:repeating-linear-gradient(90deg,#5a5a5a 0 1px,transparent 1px 2px)"></div>
<svg style="left:51px;top:338px" width="15" height="12" viewBox="0 0 15 12"><path d="M0 1 Q0 0 1 0 L5 0 L6.2 1.2 L12.8 1.2 Q13.8 1.2 13.8 2.2 L13.8 11 L0 11Z" fill="#f2ab1c"/><path d="M0 2.4 L13.8 2.4 L13.8 10.2 Q13.8 11 13 11 L0.8 11 Q0 11 0 10.2Z" fill="#fdc62a"/></svg>
<div class="t" style="left:71px;top:336px;font-size:12px;color:#1b1b1b;font-weight:400;letter-spacing:-0.1px">Windows</div>
<svg style="left:24px;top:60px" width="22" height="26" viewBox="0 0 22 26"><path d="M1 2 L11.2 2 L17 7.4 L17 22 L1 22Z" fill="#e0004a"/><path d="M11.2 2 L17 7.4 L11.2 7.4Z" fill="#a3003a"/><circle cx="14.3" cy="18.1" r="6" fill="#f3f4f6"/><circle cx="14.3" cy="18.1" r="5" fill="#22262b"/><path d="M14.3 15.2 V21 M11.4 18.1 H17.2" stroke="#fff" stroke-width="1.9"/></svg>
<svg style="left:64px;top:76px" width="9" height="6" viewBox="0 0 9 6"><path d="M1 1 L4.5 4.5 L8 1" fill="none" stroke="#8e9297" stroke-width="1.3"/></svg>
<svg style="left:90px;top:59px" width="23" height="26" viewBox="0 0 23 26"><path d="M1 1 L10.5 1 L12 2.5 L12 21 L1 21Z" fill="#90c2f2"/><path d="M5 4 L14.7 4 L21 9.6 L21 24 L5 24Z" fill="#e0004a"/><path d="M14.7 4 L21 9.6 L14.7 9.6Z" fill="#a3003a"/><circle cx="10.6" cy="18.9" r="2.5" fill="none" stroke="#fff" stroke-width="1.4"/><circle cx="15.4" cy="14.1" r="2.5" fill="none" stroke="#fff" stroke-width="1.4"/><path d="M11.4 18.1 L14.6 14.9" stroke="#fff" stroke-width="1.4"/></svg>
<svg style="left:148px;top:60px" width="28" height="24" viewBox="0 0 28 24"><path d="M13 9 C11.6 7.7 10.2 7.6 8.2 7.6 C4.6 7.6 3 9.6 3 11.8 C3 14 4.6 16 8.2 16 C10.2 16 11.6 15.9 13 14.6" fill="none" stroke="#2b2f34" stroke-width="2.3"/><path d="M15 9 C16.4 7.7 17.8 7.6 19.8 7.6 C23.4 7.6 25 9.6 25 11.8 C25 14 23.4 16 19.8 16 C17.8 16 16.4 15.9 15 14.6" fill="none" stroke="#2b2f34" stroke-width="2.3"/><path d="M10.6 2.4 L14 6.5 L17.4 2.4" fill="none" stroke="#982552" stroke-width="1.9"/><path d="M10.6 21.4 L14 17.3 L17.4 21.4" fill="none" stroke="#982552" stroke-width="1.9"/></svg>
<svg style="left:219px;top:61px" width="23" height="23" viewBox="0 0 23 23"><path d="M5 1 L15.7 1 L21 6.2 L21 21 L5 21Z" fill="#e0004a"/><path d="M15.7 1 L21 6.2 L15.7 6.2Z" fill="#a3003a"/><rect x="1" y="9" width="17.5" height="10" fill="#2d3136"/><text x="9.8" y="17.3" font-family="Liberation Sans" font-weight="700" font-size="8.5" fill="#fff" text-anchor="middle" transform="translate(9.8 0) scale(0.8 1) translate(-9.8 0)">VQL</text></svg>
<svg style="left:276px;top:58px" width="28" height="28" viewBox="0 0 28 28"><rect x="2" y="2" width="10.5" height="20" fill="#a8103f"/><rect x="3" y="3" width="10" height="20" fill="#ff9cc0"/><rect x="4" y="4" width="10.5" height="20" fill="#a8103f"/><rect x="5" y="5" width="10" height="20" fill="#ff9cc0"/><path d="M6 6 L16.5 6 L22 11.5 L22 26 L6 26Z" fill="#e0004a"/><path d="M16.5 6 L22 11.5 L16.5 11.5Z" fill="#a3003a"/><rect x="8.5" y="14" width="17.5" height="10" fill="#2d3136"/><text x="17.3" y="22.3" font-family="Liberation Sans" font-weight="700" font-size="8.5" fill="#fff" text-anchor="middle" transform="translate(17.3 0) scale(0.78 1) translate(-17.3 0)">MDL</text></svg>
<svg style="left:353px;top:59px" width="23" height="26" viewBox="0 0 23 26"><path d="M2.5 2 V20.5 M2.5 8.5 H9 M2.5 20.5 H9" fill="none" stroke="#2f3338" stroke-width="1.3"/><path d="M9 2.5 Q9 1.5 10 1.5 L12.5 1.5 L13.5 2.5 L20 2.5 L20 11.5 L9 11.5Z" fill="#f6c226"/><path d="M9 3.8 L20 3.8 L20 11.5 L9 11.5Z" fill="#fdd03a"/><path d="M9 14.5 Q9 13.5 10 13.5 L12.5 13.5 L13.5 14.5 L20 14.5 L20 24 L9 24Z" fill="#f6c226"/><path d="M9 15.8 L20 15.8 L20 24 L9 24Z" fill="#fdd03a"/></svg>
<svg style="left:408px;top:60px" width="24" height="24" viewBox="0 0 24 24"><path d="M7 6.5 L15 7.2 M5.5 9 L6 15 M12 16 L15 12" stroke="#3a3f44" stroke-width="1.1"/><path d="M2 3.2 L6 2 L9.8 3.2 L9.8 9 L6 10.2 L2 9Z" fill="#e04848"/><path d="M6 4.4 L9.8 3.2 L9.8 9 L6 10.2Z" fill="#b82626"/><path d="M17 3.5 L21.7 11 Q17 13.5 12.1 11Z" fill="#2088e8"/><path d="M17 3.5 L21.7 11 Q19.5 12.5 17.5 12.6Z" fill="#1a6cc8"/><circle cx="8.8" cy="17.8" r="3.9" fill="#4ab5a6"/></svg>
<svg style="left:455px;top:60px" width="26" height="24" viewBox="0 0 26 24"><rect x="5" y="2" width="15.8" height="13" fill="#c2c2c2"/><path d="M7.2 6.5 H14 M15.2 6.5 H17.2 M7.2 9.5 H14 M15.2 9.5 H17.2" stroke="#5e5e5e" stroke-width="1.1"/><rect x="2.2" y="14" width="14.5" height="5.8" rx="0.8" fill="#6e6e6e"/><path d="M15.5 12 H23.5 V13.3 H15.5Z M15.5 20.2 H23.5 V21.5 H15.5Z" fill="#5a5a5a"/><path d="M16.2 13.3 H22.8 L19.5 16.8 L22.8 20.2 H16.2 L19.5 16.8Z" fill="#d9d9d9" stroke="#6a6a6a" stroke-width="0.8"/></svg>
<svg style="left:520px;top:61px" width="22" height="22" viewBox="0 0 22 22"><path d="M11 1.8 L13.6 7.4 L19.8 8.1 L15.2 12.2 L16.5 18.3 L11 15.2 L5.5 18.3 L6.8 12.2 L2.2 8.1 L8.4 7.4Z" fill="#f29c0e" stroke="#f29c0e" stroke-width="1.6" stroke-linejoin="round"/></svg>
<svg style="left:579px;top:61px" width="22" height="22" viewBox="0 0 22 22"><circle cx="11" cy="10.8" r="10" fill="#2d2d2d"/><path d="M16 10.8 H7.2 M11.2 6.4 L6.8 10.8 L11.2 15.2" fill="none" stroke="#fff" stroke-width="2.1"/></svg>
<svg style="left:626px;top:61px" width="22" height="22" viewBox="0 0 22 22"><circle cx="11" cy="10.8" r="10" fill="#2d2d2d"/><path d="M6 10.8 H14.8 M10.8 6.4 L15.2 10.8 L10.8 15.2" fill="none" stroke="#fff" stroke-width="2.1"/></svg>
<svg style="left:684px;top:63px" width="18" height="18" viewBox="0 0 18 18"><path d="M2 2 L15 9 L2 16Z" fill="#7a7a7a"/></svg>
<svg style="left:741px;top:62px" width="24" height="22" viewBox="0 0 24 22"><path d="M9 4 L17.5 4 L21 7.6 L21 20 L9 20Z" fill="#bdbdbd"/><path d="M17.5 4 L21 7.6 L17.5 7.6Z" fill="#6e6e6e"/><path d="M2 2 L14 8 L2 14Z" fill="#7a7a7a"/><path d="M11.5 11.5 H18.5 M11.5 14 H18.5 M11.5 16.5 H16" stroke="#6e6e6e" stroke-width="1.1"/></svg>
<svg style="left:789px;top:76px" width="9" height="6" viewBox="0 0 9 6"><path d="M1 1 L4.5 4.5 L8 1" fill="none" stroke="#b3b7bb" stroke-width="1.3"/></svg>
<svg style="left:813px;top:63px" width="22" height="18" viewBox="0 0 22 18"><path d="M2 2 L15 9 L2 16Z" fill="#8a0a3c"/><path d="M8 2 L21 9 L8 16Z" fill="#e0004a"/></svg>
<svg style="left:864px;top:63px" width="14" height="18" viewBox="0 0 14 18"><rect x="2" y="2" width="4" height="14" fill="#2b2b2b"/><rect x="8" y="2" width="4" height="14" fill="#2b2b2b"/></svg>
<div style="left:911px;top:65px;width:14px;height:14px;background:#e0004a;"></div>
</body></html>
